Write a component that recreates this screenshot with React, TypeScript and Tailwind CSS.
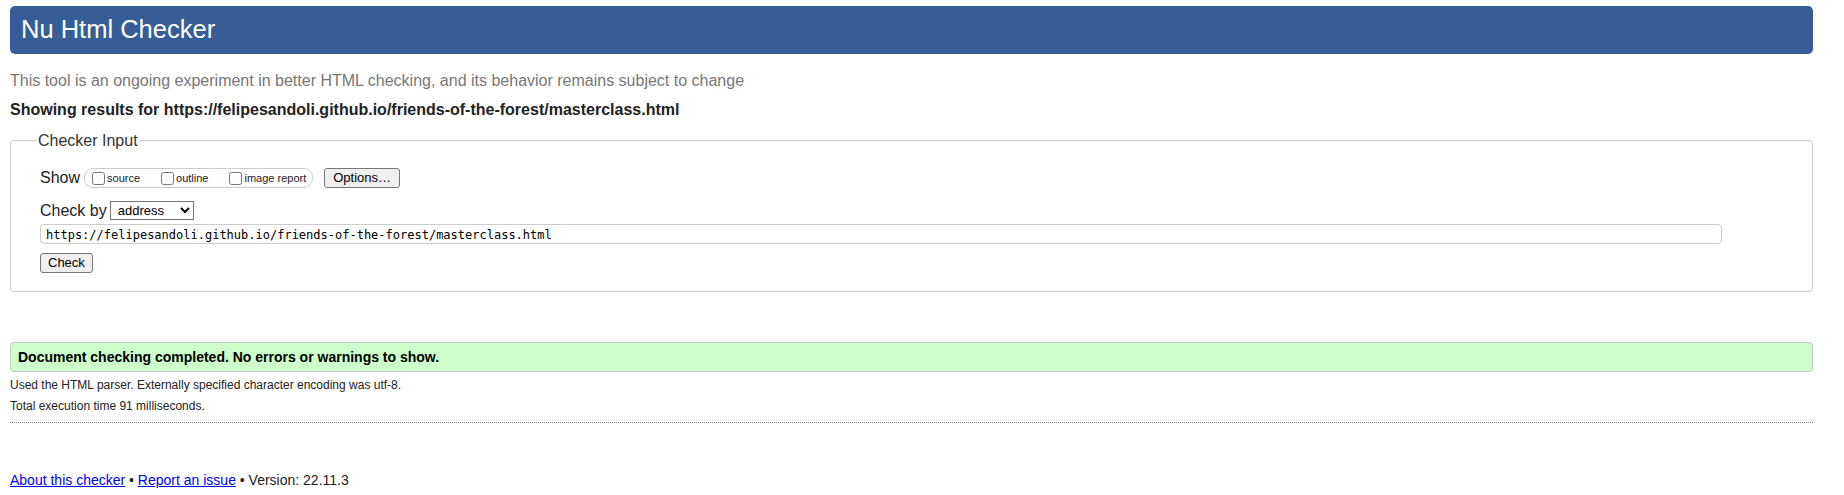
import React from "react";

const url = "https://felipesandoli.github.io/friends-of-the-forest/masterclass.html";

function ShowOption({ label }: { label: string }) {
  return (
    <label className="flex items-center text-[11px] text-[#222]">
      <input type="checkbox" className="m-0 mr-[2px] h-[13px] w-[13px]" />
      {label}
    </label>
  );
}

export default function App() {
  return (
    <div className="min-h-[495px] bg-white pl-[10px] pr-[31px] pt-[6px] font-['Liberation_Sans',Arial,sans-serif] text-[#222]">
      <h1 className="h-[48px] rounded-[5px] bg-[#365d95] pl-[11px] text-[25.5px] leading-[46px] font-normal text-white">
        Nu Html Checker
      </h1>

      <p className="mt-[17px] text-[16px] leading-[19px] text-[#777]">
        This tool is an ongoing experiment in better HTML checking, and its behavior remains subject to change
      </p>
      <p className="mt-[10px] text-[16px] font-bold leading-[19px] text-[#222]">
        Showing results for {url}
      </p>

      <fieldset className="mt-[12px] rounded-[4px] border border-[#cccccc] px-[29px] pb-[17px] pt-[17px]">
        <legend className="-ml-[3px] px-[1px] text-[16px] leading-[19px] text-[#333]">Checker Input</legend>

        <div className="flex h-[22px] items-center">
          <span className="text-[16px]">Show</span>
          <div className="ml-[4px] flex h-[20px] items-center gap-[21px] rounded-[9px] border border-[#cccccc] pl-[7px] pr-[6px]">
            <ShowOption label="source" />
            <ShowOption label="outline" />
            <ShowOption label="image report" />
          </div>
          <button className="ml-[11px] h-[20px] rounded-[3px] border border-[#767676] bg-[#efefef] px-[8px] text-[13px] leading-[18px] text-black">
            Options…
          </button>
        </div>

        <div className="mt-[11px] flex h-[21px] items-center">
          <span className="text-[16px]">Check by</span>
          <select className="ml-[3px] h-[19px] w-[84px] border border-[#767676] bg-white pl-[3px] text-[13px] text-black">
            <option>address</option>
          </select>
        </div>

        <div className="mt-[3px] flex h-[20px] w-[1682px] items-center rounded-[4px] border border-[#cccccc] px-[5px] pt-[1px] font-['DejaVu_Sans_Mono',monospace] text-[12px] text-black">
          {url}
        </div>

        <button className="mt-[9px] h-[20px] rounded-[3px] border border-[#767676] bg-[#efefef] px-[7px] text-[13px] leading-[18px] text-black">
          Check
        </button>
      </fieldset>

      <div className="mt-[50px] flex h-[30px] items-center rounded-[4px] border border-[#c4c4c4] bg-[#ccffcc] pl-[7px] text-[14px] font-bold text-black">
        Document checking completed. No errors or warnings to show.
      </div>

      <p className="mt-[3px] text-[12px] leading-[21px] text-[#222]">
        Used the HTML parser. Externally specified character encoding was utf-8.
      </p>
      <p className="text-[12px] leading-[21px] text-[#222]">Total execution time 91 milliseconds.</p>

      <hr className="mt-[5px] border-0 border-t border-dotted border-[#888]" />

      <p className="mt-[47px] text-[14px] leading-[20px] text-[#222]">
        <a className="text-[#0000ee] underline">About this checker</a> •{" "}
        <a className="text-[#0000ee] underline">Report an issue</a> • Version: 22.11.3
      </p>
    </div>
  );
}
